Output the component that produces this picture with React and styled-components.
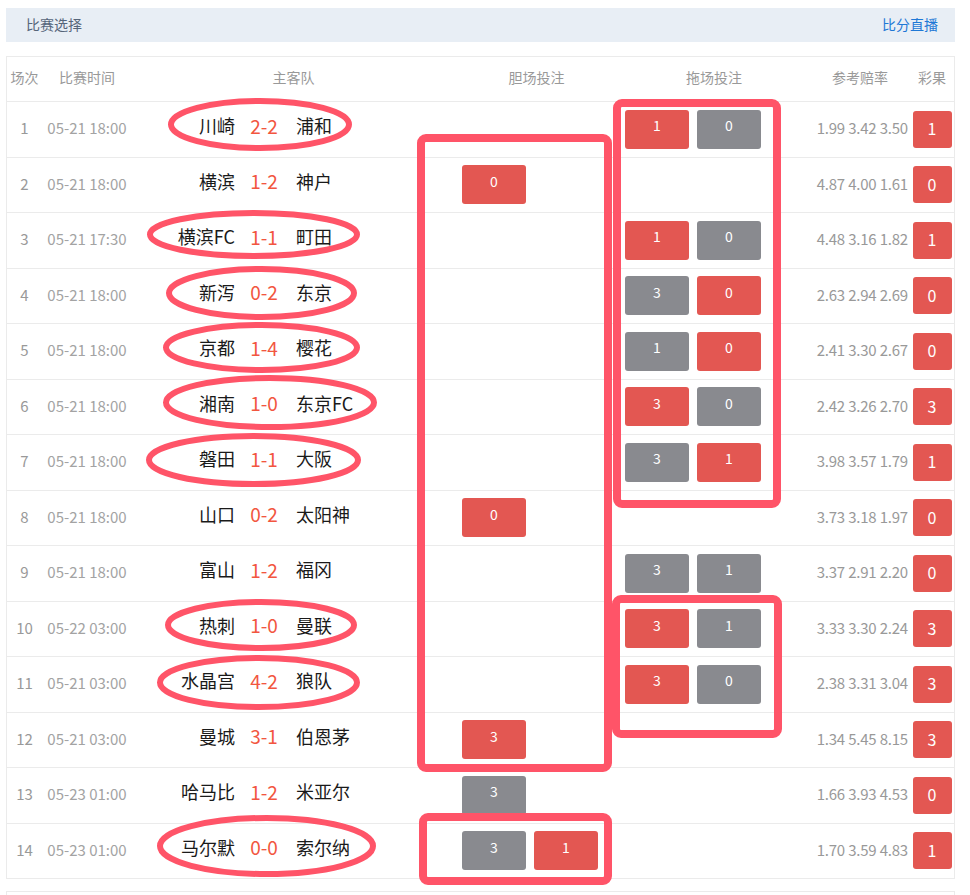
import React from 'react';
import styled, { createGlobalStyle } from 'styled-components';

const GlobalStyle = createGlobalStyle`
  html, body {
    margin: 0;
    padding: 0;
    background: #fff;
    font-family: "Noto Sans CJK SC", "Noto Sans", sans-serif;
  }
`;

const rows = [
  { no: 1, time: '05-21 18:00', home: '川崎', score: '2-2', away: '浦和', dan: [], tuo: [['1', 'r'], ['0', 'g']], odds: '1.99 3.42 3.50', res: '1' },
  { no: 2, time: '05-21 18:00', home: '横滨', score: '1-2', away: '神户', dan: [['0', 'r']], tuo: [], odds: '4.87 4.00 1.61', res: '0' },
  { no: 3, time: '05-21 17:30', home: '横滨FC', score: '1-1', away: '町田', dan: [], tuo: [['1', 'r'], ['0', 'g']], odds: '4.48 3.16 1.82', res: '1' },
  { no: 4, time: '05-21 18:00', home: '新泻', score: '0-2', away: '东京', dan: [], tuo: [['3', 'g'], ['0', 'r']], odds: '2.63 2.94 2.69', res: '0' },
  { no: 5, time: '05-21 18:00', home: '京都', score: '1-4', away: '樱花', dan: [], tuo: [['1', 'g'], ['0', 'r']], odds: '2.41 3.30 2.67', res: '0' },
  { no: 6, time: '05-21 18:00', home: '湘南', score: '1-0', away: '东京FC', dan: [], tuo: [['3', 'r'], ['0', 'g']], odds: '2.42 3.26 2.70', res: '3' },
  { no: 7, time: '05-21 18:00', home: '磐田', score: '1-1', away: '大阪', dan: [], tuo: [['3', 'g'], ['1', 'r']], odds: '3.98 3.57 1.79', res: '1' },
  { no: 8, time: '05-21 18:00', home: '山口', score: '0-2', away: '太阳神', dan: [['0', 'r']], tuo: [], odds: '3.73 3.18 1.97', res: '0' },
  { no: 9, time: '05-21 18:00', home: '富山', score: '1-2', away: '福冈', dan: [], tuo: [['3', 'g'], ['1', 'g']], odds: '3.37 2.91 2.20', res: '0' },
  { no: 10, time: '05-22 03:00', home: '热刺', score: '1-0', away: '曼联', dan: [], tuo: [['3', 'r'], ['1', 'g']], odds: '3.33 3.30 2.24', res: '3' },
  { no: 11, time: '05-21 03:00', home: '水晶宫', score: '4-2', away: '狼队', dan: [], tuo: [['3', 'r'], ['0', 'g']], odds: '2.38 3.31 3.04', res: '3' },
  { no: 12, time: '05-21 03:00', home: '曼城', score: '3-1', away: '伯恩茅', dan: [['3', 'r']], tuo: [], odds: '1.34 5.45 8.15', res: '3' },
  { no: 13, time: '05-23 01:00', home: '哈马比', score: '1-2', away: '米亚尔', dan: [['3', 'g']], tuo: [], odds: '1.66 3.93 4.53', res: '0' },
  { no: 14, time: '05-23 01:00', home: '马尔默', score: '0-0', away: '索尔纳', dan: [['3', 'g'], ['1', 'r']], tuo: [], odds: '1.70 3.59 4.83', res: '1' },
];

// hand-drawn marks over the table
const ellipses = [
  [260, 124.5, 89, 23.5],
  [253.5, 234.5, 103.5, 21.5],
  [261.5, 293, 92.5, 24],
  [261.5, 347.5, 95.5, 22.5],
  [270, 402.5, 104, 24.5],
  [253.5, 460, 104.5, 24],
  [261, 625, 93, 23],
  [258.5, 682.5, 98.5, 24.5],
  [266.5, 846, 106.5, 28],
];

const boxes = [
  [421, 138, 187, 630],
  [617, 103, 160, 401],
  [616, 599, 162, 135],
  [423, 817, 185, 64],
];

const COLS = '35px 90px 323px 163px 192px 100px 44px';

const Page = styled.div`
  position: relative;
  width: 970px;
  min-height: 895px;
  padding: 8px 15px 0 6px;
  box-sizing: border-box;
`;

const TopBar = styled.div`
  height: 34px;
  background: #e8eef5;
  display: flex;
  align-items: center;
  justify-content: space-between;
  padding: 0 17px 2px 20px;
  box-sizing: border-box;
  font-size: 14px;
`;

const BarTitle = styled.span`
  color: #56657a;
`;

const BarLink = styled.a`
  color: #1e78d6;
  text-decoration: none;
`;

const Table = styled.div`
  margin-top: 14px;
  border: 1px solid #ebebeb;
`;

const Row = styled.div`
  display: grid;
  grid-template-columns: ${COLS};
  height: ${(p) => (p.$head ? '44px' : '55.5px')};
  border-top: ${(p) => (p.$head ? 'none' : '1px solid #ebebeb')};
  box-sizing: border-box;
  align-items: center;
`;

const HeadCell = styled.div`
  text-align: center;
  font-size: 14px;
  color: #999;
  padding-bottom: 4px;
`;

const NumCell = styled.div`
  text-align: center;
  font-size: 15px;
  color: #999;
  padding-bottom: 3px;
`;

const TimeCell = styled.div`
  text-align: center;
  font-size: 15px;
  color: #a3a3a3;
  padding-bottom: 3px;
`;

const Teams = styled.div`
  display: grid;
  grid-template-columns: 103px 58px 1fr;
  align-items: center;
  padding-bottom: 8px;
`;

const Team = styled.span`
  font-size: 18px;
  color: #1a1a1a;
  text-align: ${(p) => (p.$home ? 'right' : 'left')};
  padding-left: ${(p) => (p.$home ? '0' : '3px')};
`;

const Score = styled.span`
  font-size: 19px;
  color: #f2563f;
  text-align: center;
`;

const Picks = styled.div`
  display: flex;
  gap: 8px;
  padding-left: 7px;
`;

const Pick = styled.div`
  width: 64px;
  height: 39px;
  border-radius: 3px;
  background: ${(p) => (p.$red ? '#e35752' : '#898a8f')};
  color: #fff;
  font-size: 14px;
  display: flex;
  align-items: center;
  justify-content: center;
  padding-bottom: 8px;
  box-sizing: border-box;
`;

const Odds = styled.div`
  text-align: right;
  padding-right: 2px;
  padding-bottom: 3px;
  font-size: 15px;
  color: #999;
  letter-spacing: -0.2px;
`;

const Result = styled.div`
  justify-self: center;
  width: 39px;
  height: 37px;
  border-radius: 3px;
  background: #e35752;
  color: #fff;
  font-size: 16px;
  display: flex;
  align-items: center;
  justify-content: center;
  padding-bottom: 2px;
  box-sizing: border-box;
`;

const Footer = styled.div`
  margin-top: 12px;
  height: 20px;
  border: 1px solid #ebebeb;
  border-bottom: none;
`;

const Marks = styled.svg`
  position: absolute;
  left: 0;
  top: 0;
  pointer-events: none;
`;

const heads = ['场次', '比赛时间', '主客队', '胆场投注', '拖场投注', '参考赔率', '彩果'];

export default function App() {
  return (
    <Page>
      <GlobalStyle />
      <TopBar>
        <BarTitle>比赛选择</BarTitle>
        <BarLink href="#">比分直播</BarLink>
      </TopBar>
      <Table>
        <Row $head>
          {heads.map((h) => (
            <HeadCell key={h}>{h}</HeadCell>
          ))}
        </Row>
        {rows.map((r) => (
          <Row key={r.no}>
            <NumCell>{r.no}</NumCell>
            <TimeCell>{r.time}</TimeCell>
            <Teams>
              <Team $home>{r.home}</Team>
              <Score>{r.score}</Score>
              <Team>{r.away}</Team>
            </Teams>
            <Picks>
              {r.dan.map(([v, c], i) => (
                <Pick key={i} $red={c === 'r'}>{v}</Pick>
              ))}
            </Picks>
            <Picks>
              {r.tuo.map(([v, c], i) => (
                <Pick key={i} $red={c === 'r'}>{v}</Pick>
              ))}
            </Picks>
            <Odds>{r.odds}</Odds>
            <Result>{r.res}</Result>
          </Row>
        ))}
      </Table>
      <Footer />
      <Marks width="970" height="895" viewBox="0 0 970 895">
        <g fill="none" stroke="#ff5468">
          {ellipses.map(([cx, cy, rx, ry], i) => (
            <ellipse key={i} cx={cx} cy={cy} rx={rx} ry={ry} strokeWidth="6" />
          ))}
          {boxes.map(([x, y, w, h], i) => (
            <rect key={i} x={x} y={y} width={w} height={h} rx="5" strokeWidth="8" />
          ))}
        </g>
      </Marks>
    </Page>
  );
}
